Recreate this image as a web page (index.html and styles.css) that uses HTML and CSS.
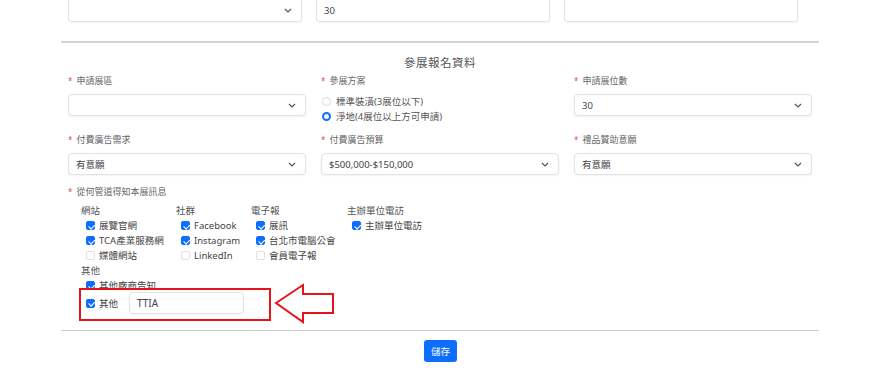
FILE: index.html
```html
<!DOCTYPE html>
<html lang="zh-Hant">
<head>
<meta charset="utf-8">
<title>參展報名資料</title>
<link rel="stylesheet" href="styles.css">
</head>
<body>
<div class="page">
  <div class="top-row">
    <div class="box box-cut select-box"><span></span><svg class="chev" viewBox="0 0 8 5" width="8" height="5"><path d="M1 1l3 3 3-3" fill="none" stroke="#555" stroke-width="1.2"/></svg></div>
    <div class="box box-cut">30</div>
    <div class="box box-cut"></div>
  </div>
  <hr class="divider">
  <h2 class="title">參展報名資料</h2>
  <div class="grid">
    <div class="field">
      <div class="label"><span class="req">*</span>申請展區</div>
      <div class="box select-box"><span></span><svg class="chev" viewBox="0 0 8 5" width="8" height="5"><path d="M1 1l3 3 3-3" fill="none" stroke="#555" stroke-width="1.2"/></svg></div>
    </div>
    <div class="field">
      <div class="label"><span class="req">*</span>參展方案</div>
      <div class="radios">
        <div class="radio-row"><span class="radio"></span>標準裝潢(3展位以下)</div>
        <div class="radio-row"><span class="radio on"></span>淨地(4展位以上方可申請)</div>
      </div>
    </div>
    <div class="field">
      <div class="label"><span class="req">*</span>申請展位數</div>
      <div class="box select-box"><span>30</span><svg class="chev" viewBox="0 0 8 5" width="8" height="5"><path d="M1 1l3 3 3-3" fill="none" stroke="#555" stroke-width="1.2"/></svg></div>
    </div>
    <div class="field">
      <div class="label"><span class="req">*</span>付費廣告需求</div>
      <div class="box select-box"><span>有意願</span><svg class="chev" viewBox="0 0 8 5" width="8" height="5"><path d="M1 1l3 3 3-3" fill="none" stroke="#555" stroke-width="1.2"/></svg></div>
    </div>
    <div class="field">
      <div class="label"><span class="req">*</span>付費廣告預算</div>
      <div class="box select-box"><span>$500,000-$150,000</span><svg class="chev" viewBox="0 0 8 5" width="8" height="5"><path d="M1 1l3 3 3-3" fill="none" stroke="#555" stroke-width="1.2"/></svg></div>
    </div>
    <div class="field">
      <div class="label"><span class="req">*</span>禮品贊助意願</div>
      <div class="box select-box"><span>有意願</span><svg class="chev" viewBox="0 0 8 5" width="8" height="5"><path d="M1 1l3 3 3-3" fill="none" stroke="#555" stroke-width="1.2"/></svg></div>
    </div>
  </div>
  <div class="channels">
    <div class="label"><span class="req">*</span>從何管道得知本展訊息</div>
    <div class="groups">
      <div class="group">
        <div class="group-title">網站</div>
        <div class="check-row"><span class="check on"></span>展覽官網</div>
        <div class="check-row"><span class="check on"></span>TCA產業服務網</div>
        <div class="check-row"><span class="check"></span>媒體網站</div>
      </div>
      <div class="group">
        <div class="group-title">社群</div>
        <div class="check-row"><span class="check on"></span>Facebook</div>
        <div class="check-row"><span class="check on"></span>Instagram</div>
        <div class="check-row"><span class="check"></span>LinkedIn</div>
      </div>
      <div class="group">
        <div class="group-title">電子報</div>
        <div class="check-row"><span class="check on"></span>展訊</div>
        <div class="check-row"><span class="check on"></span>台北市電腦公會</div>
        <div class="check-row"><span class="check"></span>會員電子報</div>
      </div>
      <div class="group">
        <div class="group-title">主辦單位電訪</div>
        <div class="check-row"><span class="check on"></span>主辦單位電訪</div>
      </div>
    </div>
    <div class="group other">
      <div class="group-title">其他</div>
      <div class="check-row"><span class="check on"></span>其他廠商告知</div>
      <div class="check-row other-row"><span class="check on"></span>其他<div class="box other-input">TTIA</div></div>
    </div>
  </div>
  <hr class="divider thin">
  <div class="actions"><button class="btn" type="button">儲存</button></div>

  <div class="highlight"></div>
  <svg class="arrow" viewBox="0 0 62 42" width="62" height="42"><polygon points="2,20 29,2 29,11 59,11 59,30 29,30 29,39" fill="#fff" stroke="#e8141c" stroke-width="2" stroke-linejoin="miter"/></svg>
</div>
</body>
</html>
```

FILE: styles.css
```css
* { box-sizing: border-box; }
html, body { margin: 0; padding: 0; background: #fff; }
body {
  font-family: "Noto Sans", "Noto Sans CJK TC", sans-serif;
  font-size: 9.5px;
  color: #444;
}
.page {
  position: relative;
  margin-left: 61px;
  width: 758px;
}
.top-row {
  display: grid;
  grid-template-columns: 234px 234px 234px;
  column-gap: 14px;
  padding-left: 7px;
}
.box {
  height: 22px;
  border: 1px solid #e3e3e3;
  border-radius: 4px;
  box-shadow: 0 1px 2px rgba(0,0,0,0.05);
  background: #fff;
  display: flex;
  align-items: center;
  padding: 0 7px;
  color: #444;
  font-size: 9.5px;
}
.box-cut {
  border-top: 0;
  border-radius: 0 0 4px 4px;
}
.select-box { justify-content: space-between; padding-right: 9px; }
.chev { display: block; }
.divider {
  margin: 19px 0 0;
  border: 0;
  height: 2px;
  background: #d4d4d4;
}
.title {
  margin: 11px 0 0;
  font-size: 11.5px;
  font-weight: normal;
  line-height: 18px;
  text-align: center;
  color: #555;
  letter-spacing: 0.5px;
}
.grid {
  display: grid;
  grid-template-columns: repeat(3, 238px);
  column-gap: 15px;
  row-gap: 8px;
  padding: 1px 7px 0;
}
.field { display: flex; flex-direction: column; }
.label {
  line-height: 16px;
  margin-bottom: 5px;
  color: #666;
  font-size: 9px;
}
.req { color: #e0505a; margin-right: 4px; font-size: 8px; }
.radios { display: flex; flex-direction: column; }
.radio-row {
  display: flex;
  align-items: center;
  line-height: 15px;
  height: 15px;
  color: #555;
  padding-left: 1px;
}
.radio {
  width: 9px; height: 9px;
  border-radius: 50%;
  border: 1px solid #dcdcdc;
  margin-right: 5px;
  flex: none;
}
.radio.on { border: 2.5px solid #0d6efd; background: #fff; }
.channels { padding: 9px 7px 0; }
.channels > .label { margin-bottom: 4px; line-height: 15px; }
.groups {
  display: grid;
  grid-template-columns: 95px 75px 96px auto;
  padding-left: 13px;
}
.group-title { line-height: 15px; color: #555; }
.check-row {
  display: flex;
  align-items: center;
  line-height: 15px;
  height: 15px;
  padding-left: 5px;
  color: #444;
}
.check {
  width: 9px; height: 9px;
  border-radius: 2px;
  border: 1px solid #e0e0e0;
  margin-right: 4px;
  flex: none;
  position: relative;
}
.check.on { background: #0d6efd; border-color: #0d6efd; }
.check.on::after {
  content: "";
  position: absolute;
  left: 2.5px; top: 0.5px;
  width: 2.5px; height: 4.5px;
  border: solid #fff;
  border-width: 0 1.3px 1.3px 0;
  transform: rotate(45deg);
}
.other { padding-left: 13px; }
.other-row { height: 22px; margin-top: -1px; }
.other-input {
  width: 115px;
  margin-left: 11px;
  font-size: 10px;
}
.thin { margin-top: 16px; height: 1px; background: #ccc; }
.actions { display: flex; justify-content: center; padding-top: 9px; }
.btn {
  height: 22px;
  padding: 0 7px;
  border: 0;
  border-radius: 3px;
  background: #0d6efd;
  color: #fff;
  font-family: "Noto Sans CJK TC", sans-serif;
  font-size: 9.5px;
  margin-left: 1px;
}
.highlight {
  position: absolute;
  left: 18px; top: 288px;
  width: 192px; height: 33px;
  border: 2px solid #e8141c;
}
.arrow {
  position: absolute;
  left: 213px; top: 283px;
}
```
